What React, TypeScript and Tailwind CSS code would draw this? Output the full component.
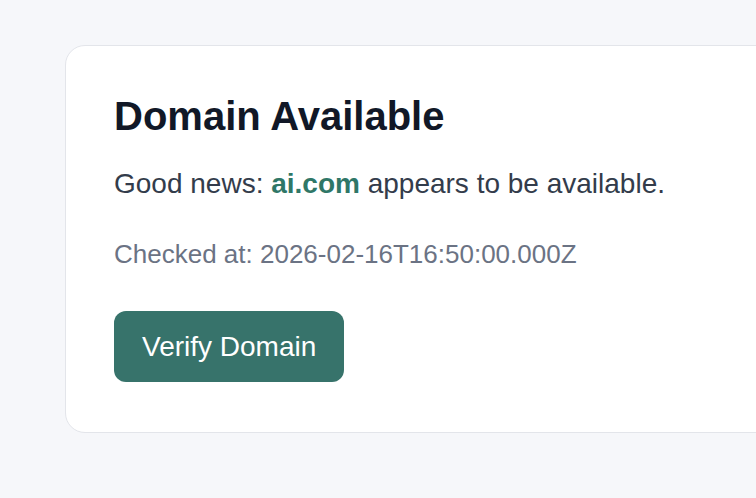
const App = () => {
  return (
    <div className="min-h-screen w-full overflow-hidden bg-[#f6f7fa] pl-[65px] pt-[45px] font-['Liberation_Sans',Arial,sans-serif]">
      <div className="w-[760px] rounded-[20px] border border-[#e3e5ea] bg-white px-[48px] pt-[47px] pb-[50px]">
        <h1 className="mb-[24px] text-[40px] font-bold leading-[1.15] text-[#111827]">Domain Available</h1>
        <p className="mb-[30px] text-[28px] leading-[1.5] text-[#333c4b]">
          Good news: <span className="font-bold text-[#2f7767]">ai.com</span> appears to be available.
        </p>
        <p className="mb-[37px] text-[26px] leading-[1.5] text-[#6b7384]">Checked at: 2026-02-16T16:50:00.000Z</p>
        <button
          type="button"
          className="rounded-[12px] bg-[#37736b] px-[28px] py-[14px] text-[28px] leading-[43px] text-white"
        >
          Verify Domain
        </button>
      </div>
    </div>
  );
};

export default App;
